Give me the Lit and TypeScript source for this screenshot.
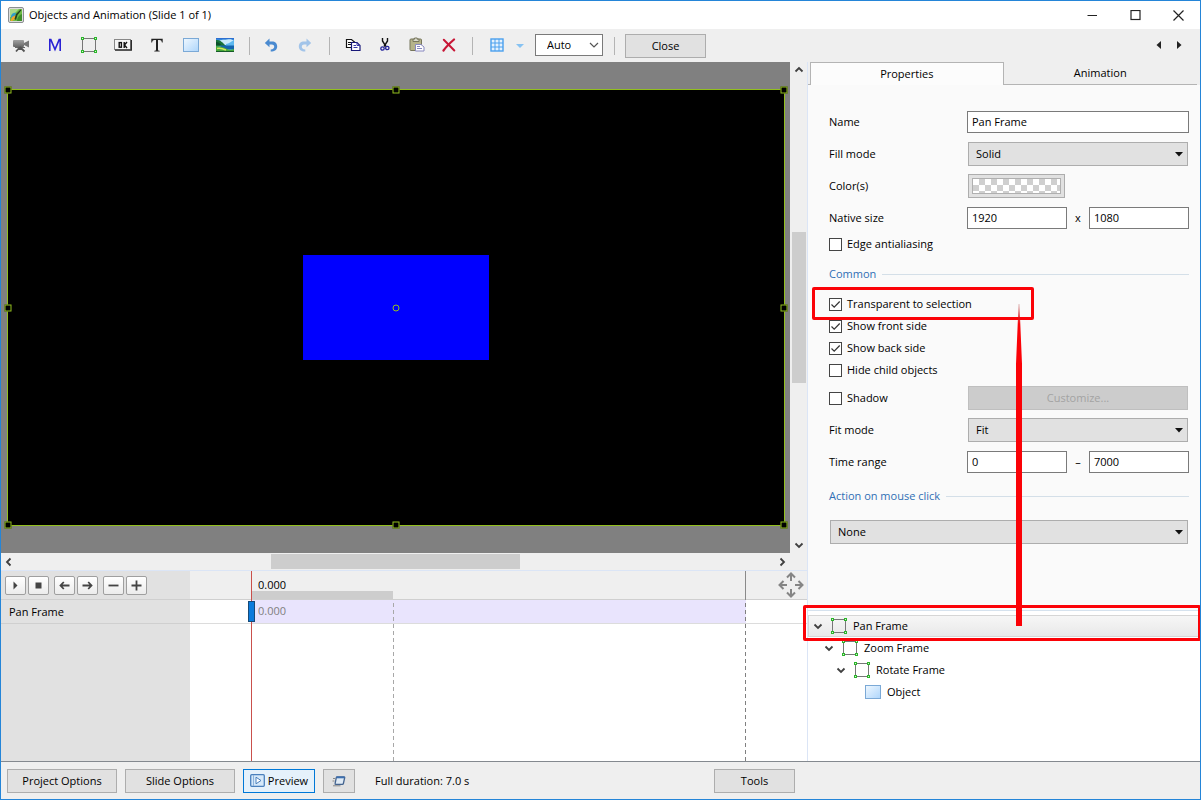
import { LitElement, html, css, nothing } from "lit";
import { customElement, state } from "lit/decorators.js";
import { classMap } from "lit/directives/class-map.js";

const chevron = (dir: "up" | "down" | "left" | "right") => {
  const d = {
    up: "M1.5 6.5 5 3l3.5 3.5",
    down: "M1.5 3.5 5 7l3.5-3.5",
    left: "M6.5 1.5 3 5l3.5 3.5",
    right: "M3.5 1.5 7 5 3.5 8.5",
  }[dir];
  return html`<svg width="10" height="10" viewBox="0 0 10 10" fill="none" stroke="#404040" stroke-width="1.8"><path d=${d} /></svg>`;
};

const frameIcon = html`<svg width="16" height="16" viewBox="0 0 16 16">
  <rect x="1.5" y="1.5" width="13" height="13" fill="none" stroke="#777" />
  <g fill="#d8f5d0" stroke="#2bb52b">
    <rect x=".5" y=".5" width="2" height="2" /><rect x="13.5" y=".5" width="2" height="2" />
    <rect x=".5" y="13.5" width="2" height="2" /><rect x="13.5" y="13.5" width="2" height="2" />
  </g>
</svg>`;

const rectIcon = html`<svg width="16" height="16" viewBox="0 0 16 16">
  <defs><linearGradient id="sky" x1="0" y1="0" x2="1" y2="1"><stop offset="0" stop-color="#f0f8ff" /><stop offset="1" stop-color="#add5fb" /></linearGradient></defs>
  <rect x=".5" y="1.5" width="15" height="13" fill="url(#sky)" stroke="#7ba9d6" />
</svg>`;

const icons = {
  logo: html`<svg width="16" height="16" viewBox="0 0 16 16">
    <rect x=".5" y=".5" width="15" height="15" rx="1.5" fill="#dcdcdc" stroke="#8b8f92" />
    <rect x="2" y="2" width="12" height="12" fill="#6dbb45" />
    <path d="M2 2h9L3 10H2z" fill="#a9d987" />
    <path d="M9 14c0-3 2-6 5-7v7z" fill="#3f8f2a" />
    <path d="M3 9c1-3 3-3.500 5-3L7 9l-3 3c-1-1-1.300-2-1-3z" fill="#2f9fc8" />
    <path d="M4 10l4-2-1.500 4.500L4 14H2.500z" fill="#f0a428" />
    <path d="M6.500 12 8 7l4.500-4.500.8.800L9.500 8 8 13z" fill="#24401f" />
  </svg>`,
  camera: html`<svg width="18" height="16" viewBox="0 0 18 16">
    <defs><linearGradient id="cam" x1="0" y1="0" x2="0" y2="1"><stop offset="0" stop-color="#a2a2a2" /><stop offset="1" stop-color="#666" /></linearGradient></defs>
    <rect x="1" y="3" width="11" height="7" rx="1" fill="url(#cam)" />
    <path d="M12 6 17 3.500v7L12 8z" fill="#777" />
    <path d="M3 10.5h10" stroke="#666" />
    <path d="M8 10 4 14.5M8 10l4.500 4.500M8 10v3" stroke="#555" stroke-width="1.8" fill="none" />
  </svg>`,
  mask: html`<svg width="14" height="14" viewBox="0 0 14 14" fill="none" stroke="#2a22d4" stroke-width="1.6"><path d="M1.800 13V1.600h1L7 11.500l4.200-9.900h1V13" /></svg>`,
  ok: html`<svg width="18" height="12" viewBox="0 0 18 12">
    <rect x=".5" y=".5" width="16" height="10" fill="#f5f5f5" stroke="#888" />
    <path d="M1 11.200h16.300V1" fill="none" stroke="#222" stroke-width="1.3" />
    <rect x="5.2" y="3.600" width="2.200" height="4.600" fill="none" stroke="#111" stroke-width="1.400" />
    <path d="M10.200 3v6M13 3l-2.600 3L13 9" fill="none" stroke="#111" stroke-width="1.400" />
  </svg>`,
  text: html`<svg width="12" height="14" viewBox="0 0 12 14" fill="#222"><path d="M.3.800h11.400v3.700h-.8c-.2-1.900-.9-2.600-2.400-2.600H7V11.400c0 1 .4 1.200 1.700 1.300v.8H3.300v-.8C4.600 12.600 5 12.400 5 11.400V1.900H3.500C2 1.900 1.300 2.600 1.100 4.500H.3z" /></svg>`,
  image: html`<svg width="18" height="16" viewBox="0 0 18 16">
    <rect y="1" width="18" height="14" fill="#3f9fe8" />
    <path d="M0 1h18v1.500H0z" fill="#2d6fd0" />
    <path d="M3 4c3-2 5-1 8-1.500S16 2 18 4v4H6z" fill="#c9ebfb" />
    <path d="M10 7c3 0 5-3 8-3.500V9h-8z" fill="#5db8f0" />
    <path d="M0 3c3-.5 5 1 6.500 2.500L10 9H0z" fill="#17723a" />
    <path d="M0 5c2 0 4 1 5 3H0z" fill="#0c4f2a" />
    <path d="M4 8.500h14V12H6z" fill="#1464ad" />
    <path d="M0 9c4 0 7 1 10 2.500S15 13 18 12v3H0z" fill="#45a83a" />
    <path d="M1 11.500c3-.8 6 .2 9 1.500" stroke="#d3e564" stroke-width="1.5" fill="none" />
    <path d="M0 14.500h18" stroke="#15592a" />
  </svg>`,
  undo: html`<svg width="14" height="14" viewBox="0 0 14 14"><path d="M5.500.5.800 5l4.700 4.300V6.500h2.200c2 0 2.500 1 2.500 2.300s-.9 2.500-3.500 2.800v2c4.200-.1 6.500-2 6.500-5.100S11.200 3.500 8 3.500H5.500z" fill="#4a8ad0" /></svg>`,
  redo: html`<svg width="14" height="14" viewBox="0 0 14 14"><path d="M8.500.5 13.200 5 8.500 9.300V6.500H6.300c-2 0-2.500 1-2.500 2.300s.9 2.500 3.500 2.800v2C3.100 13.500.8 11.600.8 8.500s2-5 5.200-5h2.500z" fill="#a2c4e9" /></svg>`,
  copy: html`<svg width="16" height="14" viewBox="0 0 16 14">
    <path d="M1.500 1.500h5L9.500 4v5.500h-8z" fill="#fff" stroke="#111" stroke-width="1.200" /><path d="M3 4.500h3M3 6.500h4" stroke="#111" />
    <path d="M6.500 4.500h5.500L15 7.500v5H6.500z" fill="#fff" stroke="#181878" stroke-width="1.200" /><path d="M8.500 7.500h2.500M8.500 9.500h4M12 4.500v3h3" fill="none" stroke="#3838a8" />
  </svg>`,
  cut: html`<svg width="10" height="15" viewBox="0 0 10 15" fill="none">
    <path d="M2.500 1v3L6 9.500M7.500 1v3L4 9.500" stroke="#111" stroke-width="1.400" />
    <circle cx="2.500" cy="11.500" r="1.700" stroke="#22229a" stroke-width="1.300" /><circle cx="7.300" cy="11" r="1.700" stroke="#22229a" stroke-width="1.300" />
  </svg>`,
  paste: html`<svg width="16" height="15" viewBox="0 0 16 15">
    <rect x="1" y="2" width="11.500" height="11.500" rx="1" fill="#b5b38a" stroke="#77765c" />
    <path d="M4 4.500V2.200h1.500V1h2.700v1.200H10v2.300z" fill="#d9d9cc" stroke="#77765c" />
    <path d="M6.500 7.500h5.500L15 10v4H6.500z" fill="#fff" stroke="#8888c0" /><path d="M8 9.500h3M8 11.500h5" stroke="#8888c0" />
  </svg>`,
  del: html`<svg width="14" height="14" viewBox="0 0 14 14" stroke="#c81636" stroke-linecap="round"><path d="M1.800 1.800 12.300 12.500" stroke-width="2" /><path d="M12 1.500C8 5 4 9 1.500 12.500" stroke-width="2.200" fill="none" /></svg>`,
  grid: html`<svg width="14" height="14" viewBox="0 0 14 14"><rect x="1" y="1" width="12" height="12" fill="#e4f1fd" stroke="#4aa0ee" stroke-width="1.400" /><path d="M5 1v12M9 1v12M1 5h12M1 9h12" stroke="#4aa0ee" /></svg>`,
  drop: html`<svg width="10" height="6" viewBox="0 0 10 6"><path d="M1 1h8L5 5z" fill="#86c2f2" /></svg>`,
  prev: html`<svg width="6" height="8" viewBox="0 0 6 8"><path d="M5 0v8L.5 4z" fill="#222" /></svg>`,
  next: html`<svg width="6" height="8" viewBox="0 0 6 8"><path d="M1 0v8l4.500-4z" fill="#222" /></svg>`,
  min: html`<svg width="11" height="11" viewBox="0 0 11 11"><path d="M.5 5.500h9.500" stroke="#222" /></svg>`,
  max: html`<svg width="11" height="11" viewBox="0 0 11 11"><rect x="1" y=".5" width="9" height="9" fill="none" stroke="#222" stroke-width="1.200" /></svg>`,
  close: html`<svg width="11" height="11" viewBox="0 0 11 11"><path d="m.5.500 10 10M10.500.5l-10 10" stroke="#222" stroke-width="1.200" /></svg>`,
  play: html`<svg width="11" height="11" viewBox="0 0 11 11"><path d="M3.500 1.500v8l4-4z" fill="#444" /></svg>`,
  stop: html`<svg width="11" height="11" viewBox="0 0 11 11"><rect x="2.500" y="2.500" width="6" height="6" fill="#444" /></svg>`,
  back: html`<svg width="11" height="11" viewBox="0 0 11 11" fill="none" stroke="#444" stroke-width="1.800"><path d="M1.500 5.500h9M4.800 2 1.500 5.500 4.800 9" /></svg>`,
  forward: html`<svg width="11" height="11" viewBox="0 0 11 11" fill="none" stroke="#444" stroke-width="1.800"><path d="M.5 5.500h9M6.200 2l3.300 3.500L6.200 9" /></svg>`,
  minus: html`<svg width="11" height="11" viewBox="0 0 11 11"><path d="M.5 5.500h10" stroke="#444" stroke-width="1.800" /></svg>`,
  plus: html`<svg width="11" height="11" viewBox="0 0 11 11"><path d="M.5 5.500h10M5.500.5v10" stroke="#444" stroke-width="1.800" /></svg>`,
  move: html`<svg width="26" height="26" viewBox="0 0 26 26" fill="none" stroke="#858585" stroke-width="2">
    <path d="M13 1.500V9M13 17v7.500M1.500 13H9M17 13h7.500M9 5.500l4-4 4 4M9 20.500l4 4 4-4M5.500 9l-4 4 4 4M20.500 9l4 4-4 4" />
  </svg>`,
  preview: html`<svg width="15" height="13" viewBox="0 0 15 13"><rect x=".7" y=".7" width="13.600" height="11.600" rx="1" fill="#d6e9fa" stroke="#4a80bd" stroke-width="1.300" /><path d="M3.500 1v11" stroke="#8fb4dc" /><path d="M6 3.200v6.600L11 6.500z" fill="#fff" stroke="#4a80bd" /></svg>`,
  window: html`<svg width="14" height="12" viewBox="0 0 14 12"><path d="M5 2h7.200q.6 0 .5.600L11.400 8.500q-.2.900-1 .9H3.600q-.7 0-.5-.7L4.300 2.600Q4.500 2 5 2z" fill="#dfeaf5" stroke="#44648f" stroke-width="1.300" /><path d="M4.500 2.400h8" stroke="#3c6fb0" stroke-width="1.800" /><path d="M1 3.500h2.500M.5 6h2M1 10.800h7.500" stroke="#888" /></svg>`,
};

const arrowDown = html`<svg class="caret" width="8" height="5" viewBox="0 0 8 5"><path d="M0 0h8L4 4.500z" fill="#111" /></svg>`;

const controls = css`
  *, *::before, *::after { box-sizing: border-box; }
  svg { display: block; flex: none; }
  button, input, select { font: inherit; color: inherit; margin: 0; border-radius: 0; outline: none; }
  button { display: inline-flex; align-items: center; justify-content: center; padding: 0; background: none; border: 0; }
  .push { height: 24px; background: #e1e1e1; border: 1px solid #adadad; }
`;

@customElement("object-stage")
export class ObjectStage extends LitElement {
  static styles = [controls, css`
    :host { display: grid; grid-template: minmax(0, 1fr) 17px / minmax(0, 1fr) 17px; background: #efefef; min-height: 0; }
    .stage { background: #808080; padding: 27px 5px 27px 6px; display: grid; }
    .frame { position: relative; background: #000; border: 1px solid #93c01f; display: grid; place-items: center; }
    .object { background: #0000ff; width: 24%; height: 24%; }
    .handle { position: absolute; width: 7px; height: 7px; background: #000; border: 1px solid #93c01f; transform: translate(-50%, -50%); }
    .l { left: 0; } .c { left: 50%; } .r { left: 100%; }
    .t { top: 0; } .m { top: 50%; } .b { top: 100%; }
    .pivot { background: transparent; border-radius: 50%; }
    .bar { display: flex; align-items: center; }
    .vertical { flex-direction: column; }
    .end { flex: none; width: 16px; height: 16px; display: grid; place-items: center; }
    .space { flex: 154; }
    .thumb { flex: 152; background: #cdcdcd; align-self: stretch; margin: 0 1px 0 2px; }
    .horizontal .space { flex: 254; }
    .horizontal .thumb { flex: 250; margin: 1px 0; }
  `];

  render() {
    const spots = ["l t", "c t", "r t", "l m", "r m", "l b", "c b", "r b"];
    return html`
      <div class="stage">
        <div class="frame">
          <div class="object"></div>
          ${spots.map((s) => html`<span class="handle ${s}"></span>`)}
          <span class="handle pivot c m"></span>
        </div>
      </div>
      <div class="bar vertical">
        <span class="end">${chevron("up")}</span><span class="space"></span><span class="thumb"></span><span class="space"></span><span class="end">${chevron("down")}</span>
      </div>
      <div class="bar horizontal">
        <span class="end">${chevron("left")}</span><span class="space"></span><span class="thumb"></span><span class="space"></span><span class="end">${chevron("right")}</span>
      </div>`;
  }
}

@customElement("key-timeline")
export class KeyTimeline extends LitElement {
  static styles = [controls, css`
    :host { display: grid; grid-template-columns: 189px minmax(0, 1fr); height: 191px; background: #fff; border-top: 1px solid #dbe5f6; }
    .names { background: #e1e1e1; }
    .tools { height: 29px; padding: 0 4px; display: flex; align-items: center; gap: 2px; border-bottom: 1px solid #cfcfcf; }
    .tools button { width: 21px; height: 19px; border: 1px solid #9f9f9f; border-radius: 2px; background: linear-gradient(#fff, #ececec); }
    .tools .lead { margin-left: 3px; }
    .name { height: 24px; line-height: 24px; padding-left: 8px; border-bottom: 1px solid #cfcfcf; }
    .tracks { position: relative; }
    .ruler { height: 29px; background: #efefef; border-bottom: 1px solid #cfcfcf; display: grid; grid-template: 20px 8px / 61px 142px 1fr 26px; padding-right: 3px; }
    .ruler .time { grid-column: 2; padding-left: 7px; line-height: 28px; }
    .ruler .range { grid-area: 2 / 2; background: #cdcdcd; }
    .ruler .fit { grid-area: 1 / 4 / 3 / 5; }
    .lane { height: 24px; border-bottom: 1px solid #dcdcdc; padding-left: 61px; display: flex; }
    .span { width: 495px; padding-left: 7px; line-height: 22px; background: #e9e4fd; color: #808080; }
    .line { position: absolute; top: 0; bottom: 0; width: 1px; }
    .now { left: 61px; background: #c9504c; }
    .mid { left: 203px; top: 29px; background: repeating-linear-gradient(#fff0 0 3px, #a8a8a8 3px 7px); }
    .last { left: 555px; top: 29px; background: repeating-linear-gradient(#fff0 0 3px, #808080 3px 7px); }
    .tick { left: 555px; top: 0; height: 29px; background: #8a8a8a; }
    .key { position: absolute; left: 58px; top: 30px; width: 7px; height: 21px; background: #0c7bdc; border: 1px solid #174a78; }
  `];

  render() {
    return html`
      <div class="names">
        <div class="tools">
          <button aria-label="Play">${icons.play}</button>
          <button aria-label="Stop">${icons.stop}</button>
          <button class="lead" aria-label="Previous keypoint">${icons.back}</button>
          <button aria-label="Next keypoint">${icons.forward}</button>
          <button class="lead" aria-label="Remove keypoint">${icons.minus}</button>
          <button aria-label="Add keypoint">${icons.plus}</button>
        </div>
        <div class="name">Pan Frame</div>
      </div>
      <div class="tracks">
        <div class="ruler">
          <span class="time">0.000</span><span class="range"></span>
          <button class="fit" aria-label="Fit timeline">${icons.move}</button>
        </div>
        <div class="lane"><span class="span">0.000</span></div>
        <span class="line mid"></span><span class="line tick"></span><span class="line last"></span>
        <span class="line now"></span><span class="key"></span>
      </div>`;
  }
}

@customElement("property-sheet")
export class PropertySheet extends LitElement {
  static styles = [controls, css`
    :host { display: flex; flex-direction: column; background: #fafafa; border-left: 1px solid #dbe5f6; min-height: 0; }
    .tabs { display: grid; grid-template-columns: 2px 1fr 1fr; padding-right: 3px; height: 23px; background: #efefef; flex: none; }
    .tabs > * { border-bottom: 1px solid #b4b4b4; }
    .tabs .on { background: #fcfcfc; border: 1px solid #b4b4b4; border-bottom: 0; }
    .sheet { padding: 25px 11px 0 21px; flex: 1; }
    .fields { display: grid; gap: 8px; }
    .field { display: grid; grid-template-columns: 138px minmax(0, 1fr); align-items: center; height: 24px; }
    .checks { display: grid; gap: 6px; justify-items: start; }
    .fields + .checks { margin-top: 6px; }
    .checks + .fields { margin-top: 8px; }
    .box { height: 22px; width: 100%; min-width: 0; padding: 0 4px 2px; background: #fff; border: 1px solid #7a7a7a; }
    .pair { display: grid; grid-template-columns: 1fr 22px 1fr; align-items: center; text-align: center; }
    .pick { position: relative; display: grid; margin: 0 1px; }
    .pick select { appearance: none; height: 24px; width: 100%; padding: 0 7px; background: #e1e1e1; border: 1px solid #adadad; }
    .caret { position: absolute; right: 5px; top: 10px; pointer-events: none; }
    .color { width: 97px; height: 24px; margin-left: 1px; padding: 3px; background: #e1e1e1; border: 1px solid #adadad; }
    .swatch { flex: 1; align-self: stretch; border: 1px solid #b0b0b0; background: repeating-conic-gradient(#cfcfcf 0 25%, #fff 0 50%) 0 0 / 12px 12px; }
    .push { margin: 0 1px; }
    .push:disabled { background: #cccccc; border-color: #bfbfbf; color: #a3a3a3; }
    .check { position: relative; display: flex; align-items: center; gap: 5px; height: 16px; }
    .check input { appearance: none; width: 13px; height: 13px; border: 1px solid #444; background: #fff; }
    .check input:checked { background: #fff url("data:image/svg+xml,%3Csvg xmlns='http://www.w3.org/2000/svg' viewBox='0 0 11 11'%3E%3Cpath d='M1.500 5.500 4.200 8.200 9.700 2.500' fill='none' stroke='%23333' stroke-width='1.200'/%3E%3C/svg%3E"); }
    h2 { font: inherit; color: #2f6fb5; margin: 14px 0; height: 16px; display: flex; align-items: center; gap: 6px; }
    h2::after { content: ""; flex: 1; height: 1px; background: #d4dfe8; }
    .wide { margin-top: 16px; }
    .mark { position: absolute; left: -17px; top: -9px; width: 222px; height: 33px; border: 3px solid #fb0207; border-radius: 2px; pointer-events: none; }
  `];

  private select(id: string, value: string) {
    return html`<span class="pick"><select id=${id} aria-label=${id}><option>${value}</option></select>${arrowDown}</span>`;
  }

  private check(label: string, checked: boolean, marked = false) {
    return html`<label class="check"><input type="checkbox" .checked=${checked} />${label}${marked ? html`<span class="mark"></span>` : nothing}</label>`;
  }

  render() {
    return html`
      <div class="tabs" role="tablist"><span></span><button class="on" role="tab">Properties</button><button role="tab">Animation</button></div>
      <div class="sheet">
        <div class="fields">
          <div class="field"><label for="name">Name</label><input class="box" id="name" value="Pan Frame" /></div>
          <div class="field"><label for="fill">Fill mode</label>${this.select("fill", "Solid")}</div>
          <div class="field"><label for="color">Color(s)</label><button class="color" id="color"><span class="swatch"></span></button></div>
          <div class="field"><label for="w">Native size</label><span class="pair"><input class="box" id="w" value="1920" />x<input class="box" aria-label="Native height" value="1080" /></span></div>
        </div>
        <div class="checks">${this.check("Edge antialiasing", false)}</div>
        <h2>Common</h2>
        <div class="checks">
          ${this.check("Transparent to selection", true, true)}
          ${this.check("Show front side", true)}
          ${this.check("Show back side", true)}
          ${this.check("Hide child objects", false)}
        </div>
        <div class="fields">
          <div class="field">${this.check("Shadow", false)}<button class="push" disabled>Customize...</button></div>
          <div class="field"><label for="fit">Fit mode</label>${this.select("fit", "Fit")}</div>
          <div class="field"><label for="from">Time range</label><span class="pair"><input class="box" id="from" value="0" />–<input class="box" aria-label="Time range end" value="7000" /></span></div>
        </div>
        <h2>Action on mouse click</h2>
        <div class="wide">${this.select("action", "None")}</div>
      </div>`;
  }
}

@customElement("object-tree")
export class ObjectTree extends LitElement {
  static styles = [controls, css`
    :host { display: block; position: relative; height: 151px; padding-top: 4px; background: #fff; border-top: 1px solid #d5e2ee; border-left: 1px solid #dbe5f6; }
    .row { display: flex; align-items: center; height: 22px; padding-left: 5px; gap: 6px; }
    .twist { width: 10px; }
    .row svg:not(.twist svg) { margin-left: 2px; }
    .on { background: linear-gradient(#f7f7f7, #e8e8e8); box-shadow: inset 0 0 0 1px #d6d6d6; }
    .d1 { padding-left: 16px; } .d2 { padding-left: 28px; } .d3 { padding-left: 39px; }
    .mark { position: absolute; left: -5px; right: -1px; top: -6px; height: 36px; border: 3px solid #fb0207; border-radius: 2px; pointer-events: none; }
    .pointer { position: absolute; left: 208px; bottom: 135px; pointer-events: none; }
  `];

  render() {
    const rows = ["Pan Frame", "Zoom Frame", "Rotate Frame", "Object"];
    return html`
      ${rows.map((name, depth) => html`
        <div class=${classMap({ row: true, on: depth === 0, ["d" + depth]: true })}>
          <span class="twist">${depth < 3 ? chevron("down") : nothing}</span>${depth < 3 ? frameIcon : rectIcon}<span>${name}</span>
        </div>`)}
      <span class="mark"></span>
      <svg class="pointer" width="6" height="322" viewBox="0 0 6 322">
        <defs><linearGradient id="fade" gradientUnits="userSpaceOnUse" x1="0" y1="0" x2="0" y2="20"><stop offset="0" stop-color="#a33" stop-opacity=".3" /><stop offset="1" stop-color="#fb0207" /></linearGradient></defs>
        <path d="M2.500 0h1L4.300 20 6 60v262H0V60L1.700 20z" fill="url(#fade)" />
      </svg>`;
  }
}

@customElement("app-root")
export class AppRoot extends LitElement {
  @state() private title = "Objects and Animation (Slide 1 of 1)";

  static styles = [controls, css`
    :host { display: grid; grid-template: 28px 33px minmax(0, 1fr) 38px / minmax(0, 1fr) 393px; height: 100vh; box-sizing: border-box; border: 1px solid #2485d8; background: #efefef; font: 11px/16px "Open Sans", "Noto Sans", sans-serif; color: #000; overflow: hidden; }
    .title { grid-column: 1 / -1; background: #fff; display: flex; align-items: center; gap: 5px; padding: 0 16px 0 7px; }
    .title h1 { font: inherit; margin: 0; flex: 1; }
    .window { display: flex; gap: 32px; }
    .tools { grid-column: 1 / -1; display: flex; align-items: center; padding: 0 18px 0 3px; }
    .tools .icon { width: 34px; height: 28px; padding-bottom: 2px; }
    .tools .tight { width: 32px; }
    .sep { width: 1px; height: 18px; background: #b4b4b4; margin: 0 7px; }
    .sep.lead { margin-right: 4px; }
    .sep.late { margin: 0 10px 0 11px; }
    .drop { width: 20px; height: 28px; margin: 0 5px 0 -4px; }
    .zoom { position: relative; display: flex; align-items: center; margin-bottom: 2px; }
    .zoom select { appearance: none; width: 68px; height: 22px; padding: 0 11px; background: #fff; border: 1px solid #7a7a7a; }
    .zoom svg { position: absolute; right: 4px; pointer-events: none; }
    .close { width: 81px; }
    .grow { flex: 1; }
    .pages { display: flex; gap: 14px; margin-bottom: 2px; }
    .left, .right { display: flex; flex-direction: column; min-height: 0; }
    object-stage, property-sheet { flex: 1; }
    object-tree { flex: none; }
    .foot { grid-column: 1 / -1; border-top: 1px solid #84898f; display: flex; align-items: center; gap: 8px; padding: 0 6px; }
    .foot .push { width: 110px; }
    .foot .preview { width: 72px; gap: 3px; background: #e5f1fb; border-color: #0078d7; }
    .foot .small { width: 32px; }
    .foot .length { flex: 1; margin-left: 12px; }
    .foot .menu { width: 81px; }
    .foot .rest { width: 391px; }
  `];

  render() {
    const tool = (name: string, icon: unknown, cls = "") => html`<button class="icon ${cls}" aria-label=${name}>${icon}</button>`;
    return html`
      <header class="title">
        ${icons.logo}<h1>${this.title}</h1>
        <div class="window"><button aria-label="Minimize">${icons.min}</button><button aria-label="Maximize">${icons.max}</button><button aria-label="Close window">${icons.close}</button></div>
      </header>
      <div class="tools">
        ${tool("Camera", icons.camera)}${tool("Mask", icons.mask)}${tool("Frame", frameIcon)}${tool("Button", icons.ok)}
        ${tool("Text", icons.text)}${tool("Rectangle", rectIcon)}${tool("Image", icons.image)}
        <span class="sep lead"></span>
        ${tool("Undo", icons.undo)}${tool("Redo", icons.redo)}
        <span class="sep"></span>
        ${tool("Copy", icons.copy, "tight")}${tool("Cut", icons.cut, "tight")}${tool("Paste", icons.paste, "tight")}${tool("Delete", icons.del, "tight")}
        <span class="sep"></span>
        ${tool("Grid", icons.grid)}<button class="drop" aria-label="Grid options">${icons.drop}</button>
        <span class="zoom"><select aria-label="Zoom"><option>Auto</option></select>
          <svg width="10" height="10" viewBox="0 0 10 10" fill="none" stroke="#555" stroke-width="1.200"><path d="M1 3l4 4 4-4" /></svg></span>
        <span class="sep late"></span>
        <button class="push close">Close</button>
        <span class="grow"></span>
        <span class="pages"><button aria-label="Previous slide">${icons.prev}</button><button aria-label="Next slide">${icons.next}</button></span>
      </div>
      <div class="left"><object-stage></object-stage><key-timeline></key-timeline></div>
      <div class="right"><property-sheet></property-sheet><object-tree></object-tree></div>
      <footer class="foot">
        <button class="push">Project Options</button><button class="push">Slide Options</button>
        <button class="push preview">${icons.preview}Preview</button><button class="push small" aria-label="Preview window">${icons.window}</button>
        <span class="length">Full duration: 7.0 s</span>
        <button class="push menu">Tools</button><span class="rest"></span>
      </footer>`;
  }
}
